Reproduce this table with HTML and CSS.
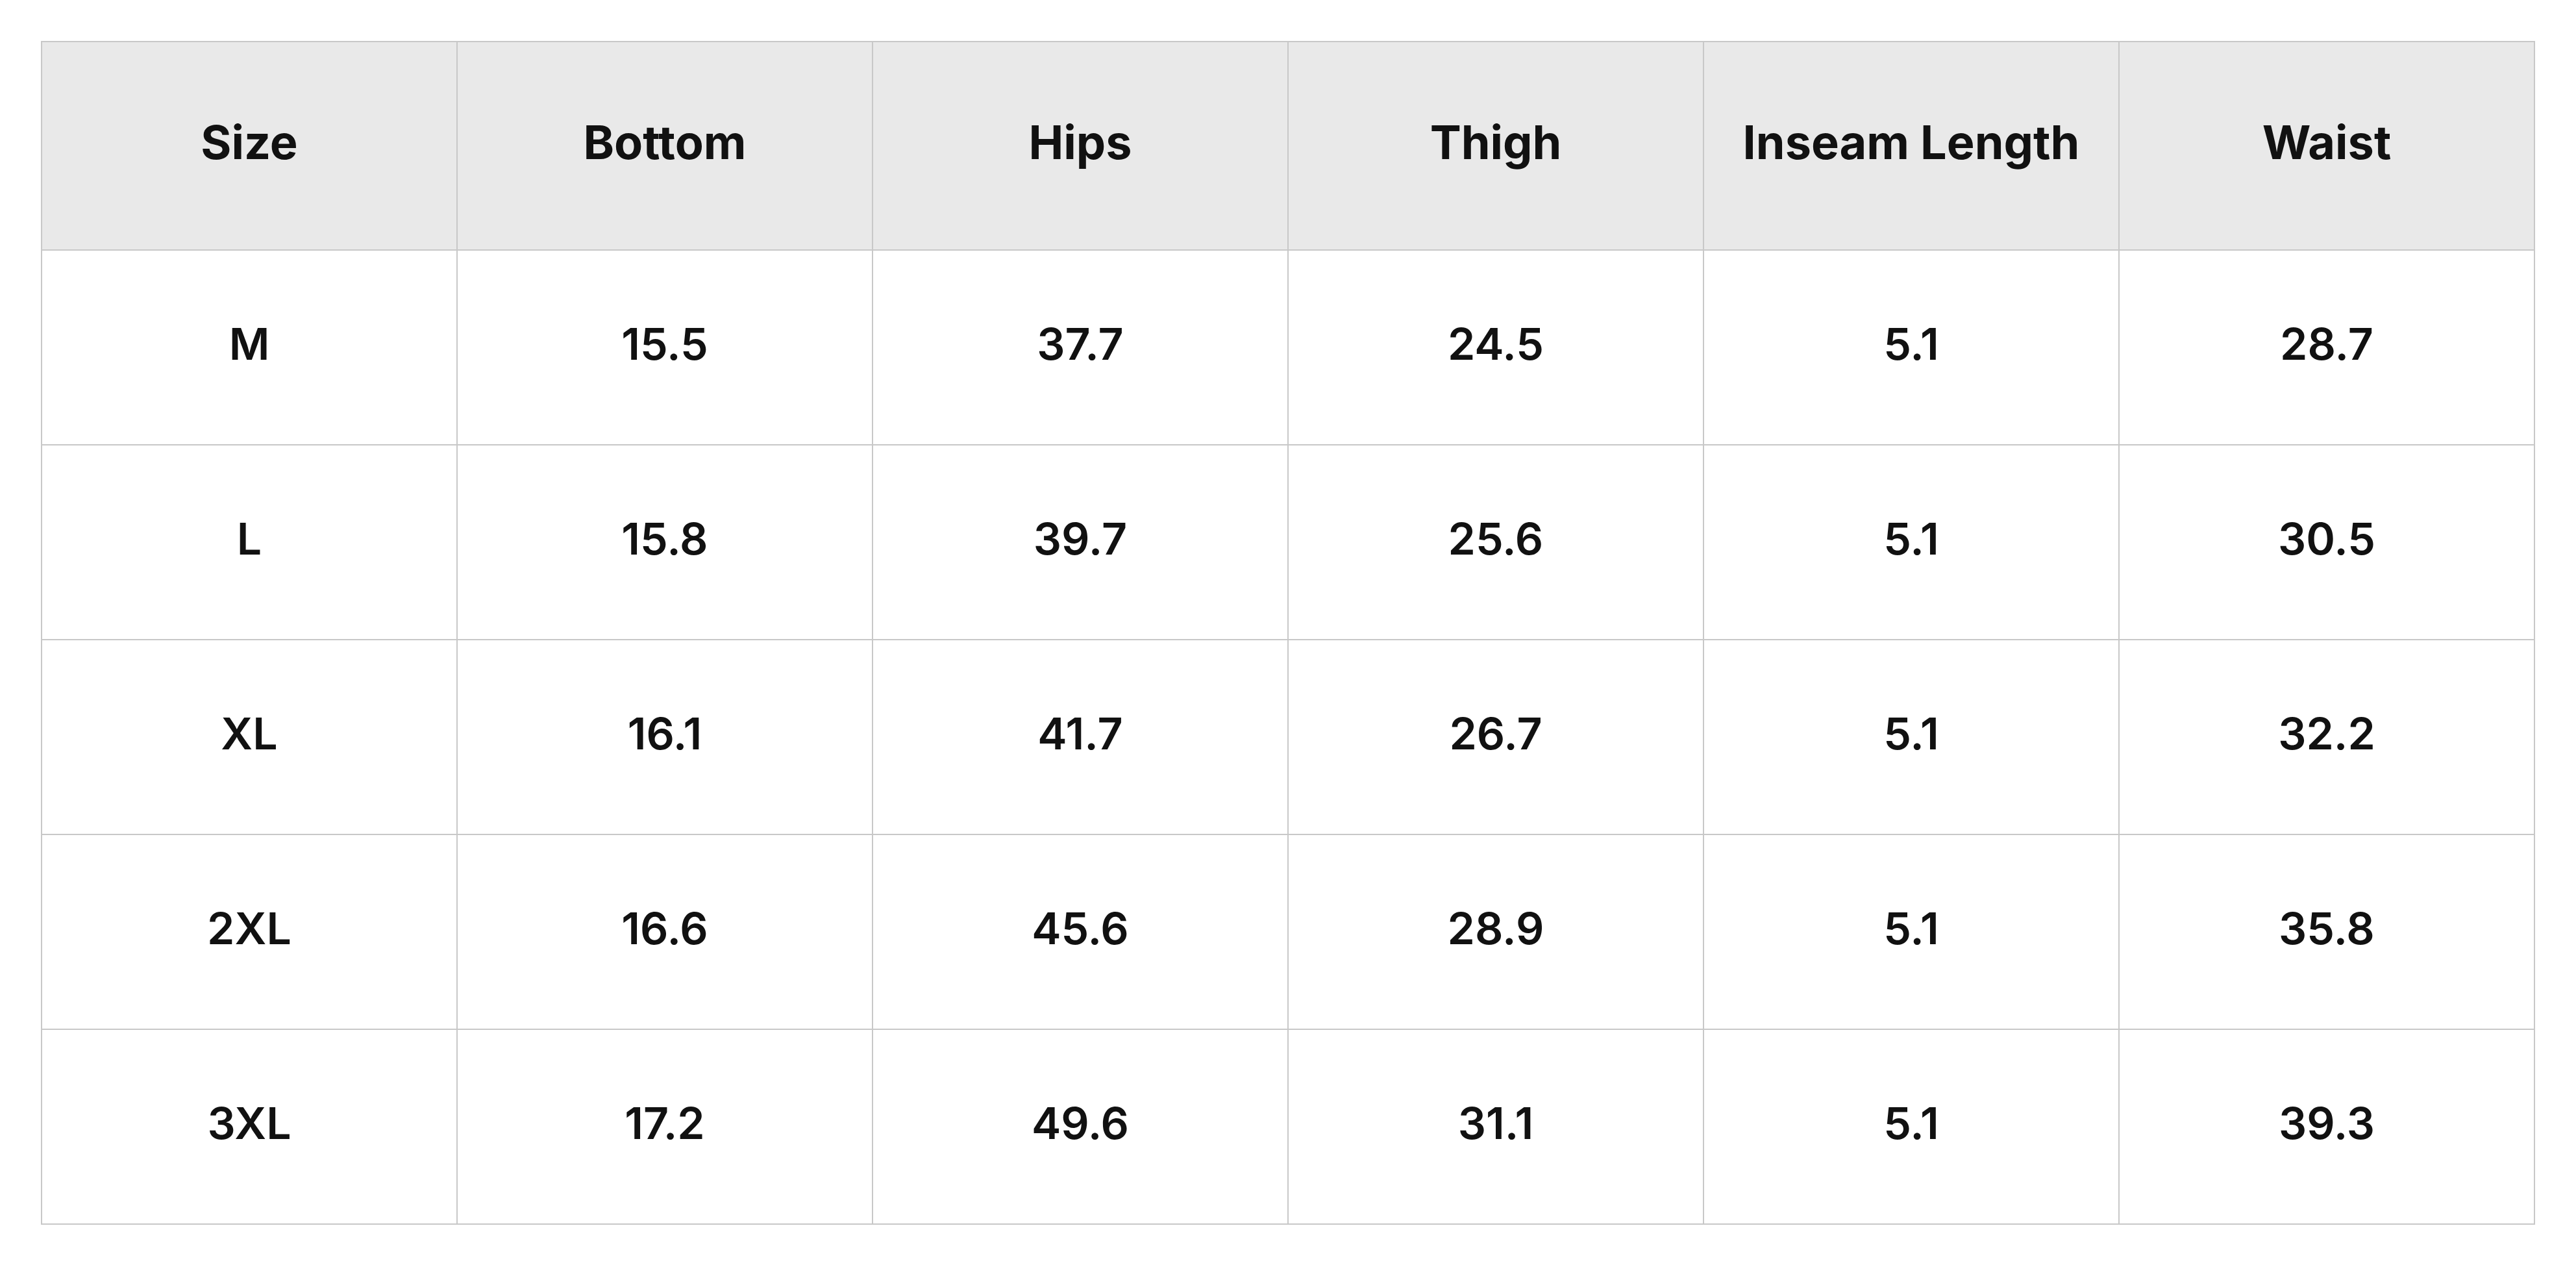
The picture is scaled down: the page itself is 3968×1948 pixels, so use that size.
FILE: index.html
```html
<!DOCTYPE html>
<html lang="en">
<head>
<meta charset="utf-8">
<title>Size Chart</title>
<link rel="stylesheet" href="styles.css">
</head>
<body>
<div class="page">
  <table class="size-table">
    <thead>
      <tr>
        <th>Size</th><th>Bottom</th><th>Hips</th><th>Thigh</th><th>Inseam Length</th><th>Waist</th>
      </tr>
    </thead>
    <tbody>
      <tr><td>M</td><td>15.5</td><td>37.7</td><td>24.5</td><td>5.1</td><td>28.7</td></tr>
      <tr><td>L</td><td>15.8</td><td>39.7</td><td>25.6</td><td>5.1</td><td>30.5</td></tr>
      <tr><td>XL</td><td>16.1</td><td>41.7</td><td>26.7</td><td>5.1</td><td>32.2</td></tr>
      <tr><td>2XL</td><td>16.6</td><td>45.6</td><td>28.9</td><td>5.1</td><td>35.8</td></tr>
      <tr><td>3XL</td><td>17.2</td><td>49.6</td><td>31.1</td><td>5.1</td><td>39.3</td></tr>
    </tbody>
  </table>
</div>
</body>
</html>
```
FILE: styles.css
```css
html, body {
  margin: 0;
  padding: 0;
  background: #ffffff;
}

.page {
  padding: 63px;
}

.size-table {
  width: 100%;
  border-collapse: collapse;
  table-layout: fixed;
  font-family: Inter, "Noto Sans", sans-serif;
  color: #111111;
}

.size-table th,
.size-table td {
  border: 2px solid #c8c8c8;
  text-align: center;
  vertical-align: middle;
  padding: 0 0 12px 0;
}

.size-table thead tr {
  height: 321px;
}

.size-table th {
  background: #e9e9e9;
  font-size: 72px;
  font-weight: 700;
}

.size-table tbody tr {
  height: 300px;
}

.size-table td {
  font-size: 68px;
  font-weight: 600;
}
```
